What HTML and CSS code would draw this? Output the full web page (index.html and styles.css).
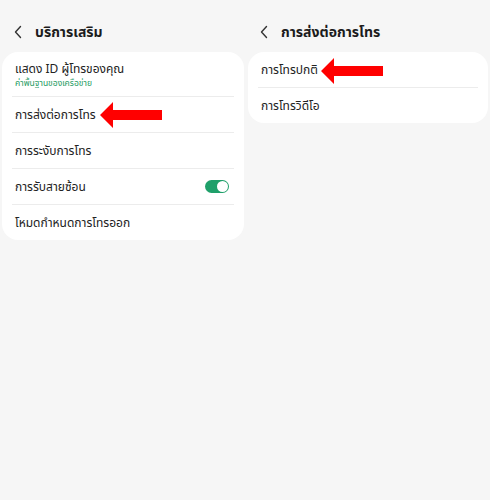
FILE: index.html
```html
<!DOCTYPE html>
<html lang="th">
<head>
  <meta charset="UTF-8">
  <meta name="viewport" content="width=device-width, initial-scale=1.0">
  <title>บริการเสริม</title>
  <link rel="stylesheet" href="styles.css">
</head>
<body>
  <div class="screens">
    <!-- บริการเสริม -->
    <div class="screen">
      <div class="header">
        <svg class="back" width="10" height="14" viewBox="0 0 10 14"><path d="M7.5 1.5 L2.5 7 L7.5 12.5" fill="none" stroke="#333" stroke-width="1.4" stroke-linecap="round" stroke-linejoin="round"/></svg>
        <h1>บริการเสริม</h1>
      </div>
      <div class="card">
        <div class="row row-tall">
          <div class="label">แสดง ID ผู้โทรของคุณ</div>
          <div class="sub">ค่าพื้นฐานของเครือข่าย</div>
        </div>
        <div class="row marked">
          <div class="label">การส่งต่อการโทร</div>
          <svg class="arrow" width="64" height="28" viewBox="0 0 64 28"><path d="M0 14 L13 1 L13 9 L62 9 L62 19 L13 19 L13 27 Z" fill="#ff0000"/></svg>
        </div>
        <div class="row"><div class="label">การระงับการโทร</div></div>
        <div class="row row-switch">
          <div class="label">การรับสายซ้อน</div>
          <span class="switch on"><span class="knob"></span></span>
        </div>
        <div class="row"><div class="label">โหมดกำหนดการโทรออก</div></div>
      </div>
    </div>

    <!-- การส่งต่อการโทร -->
    <div class="screen">
      <div class="header">
        <svg class="back" width="10" height="14" viewBox="0 0 10 14"><path d="M7.5 1.5 L2.5 7 L7.5 12.5" fill="none" stroke="#333" stroke-width="1.4" stroke-linecap="round" stroke-linejoin="round"/></svg>
        <h1>การส่งต่อการโทร</h1>
      </div>
      <div class="card">
        <div class="row marked">
          <div class="label">การโทรปกติ</div>
          <svg class="arrow arrow-right" width="64" height="28" viewBox="0 0 64 28"><path d="M0 14 L13 1 L13 9 L62 9 L62 19 L13 19 L13 27 Z" fill="#ff0000"/></svg>
        </div>
        <div class="row"><div class="label">การโทรวิดีโอ</div></div>
      </div>
    </div>
  </div>
</body>
</html>
```

FILE: styles.css
```css
body {
  margin: 0;
  background-color: #f6f6f6;
  font-family: "Noto Sans Thai", "Noto Sans", sans-serif;
  color: #222;
}

.screens {
  display: grid;
  grid-template-columns: 245px 245px;
}

.screen {
  padding: 0 1px 0 2px;
}

.screen + .screen {
  padding: 0 2px 0 3px;
}

.header {
  display: flex;
  align-items: center;
  height: 32px;
  padding: 16px 0 4px 11px;
  box-sizing: content-box;
}

.back {
  margin-right: 12px;
}

.header h1 {
  margin: 0;
  font-size: 14px;
  font-weight: 700;
  color: #1c1c1c;
}

.card {
  background-color: #fff;
  border-radius: 16px;
  padding: 0 10px;
}

.row {
  position: relative;
  display: flex;
  flex-direction: column;
  justify-content: center;
  height: 35px;
  padding: 0 3px;
  border-bottom: 1px solid #ececec;
}

.row:last-child {
  border-bottom: none;
}

.row-tall {
  height: 41px;
  padding-top: 3px;
}

.row-tall .label {
  line-height: 15px;
}

.row-switch {
  flex-direction: row;
  align-items: center;
  justify-content: space-between;
}

.label {
  font-size: 12px;
  line-height: 16px;
}

.sub {
  margin-top: 1px;
  font-size: 8.5px;
  line-height: 12px;
  color: #1e9b63;
}

.switch {
  position: relative;
  width: 24px;
  height: 13px;
  margin-right: 2px;
  border-radius: 7px;
  background-color: #1fa06a;
}

.knob {
  position: absolute;
  top: 1px;
  right: 1px;
  width: 11px;
  height: 11px;
  border-radius: 50%;
  background-color: #fff;
}

/* red pointer laid over the row */
.arrow {
  position: absolute;
  left: 88px;
  top: 4px;
}

.arrow-right {
  left: 63px;
  top: 5px;
}
```
